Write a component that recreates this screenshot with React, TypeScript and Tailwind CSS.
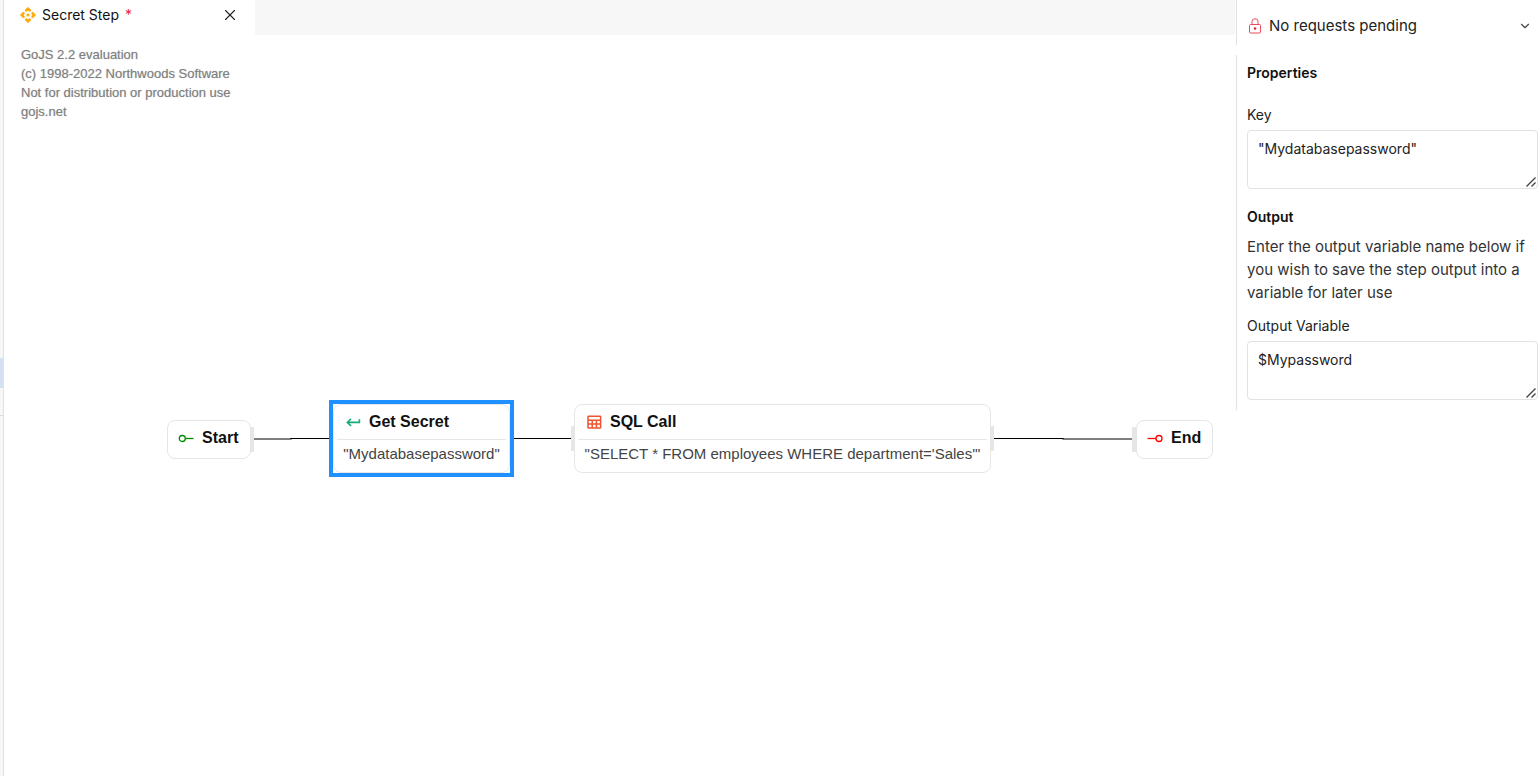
import React from 'react';
import { ChevronDown, X } from 'lucide-react';

const StepIcon = () => (
  <svg className="w-4 h-4 shrink-0" viewBox="0 0 16 16" fill="#ffab0f" stroke="#ffab0f" strokeWidth="1.2" strokeLinejoin="round">
    <path d="M8 0.8l2.6 2.4-.7 1L8 3 6.1 4.2l-.7-1zM8 15.2l2.6-2.4-.7-1L8 13l-1.9-1.2-.7 1zM0.8 8l2.4-2.6 1 .7L3 8l1.2 1.9-1 .7zM15.2 8l-2.4-2.6-1 .7L13 8l-1.2 1.9 1 .7z" />
    <circle cx="8" cy="8" r="1" />
    <path d="M5.3 8h.2M10.5 8h.2" strokeWidth="1" />
  </svg>
);

const LockIcon = () => (
  <svg className="w-3 h-4 shrink-0" viewBox="0 0 12 16" fill="none" stroke="#ec4a5c">
    <rect x="0.5" y="6.5" width="11" height="8.5" rx="1" />
    <path d="M3 6.5V3.5a3 2.7 0 0 1 6 0v3" />
    <circle cx="6" cy="10.5" r="1.3" fill="#e0233c" stroke="none" />
  </svg>
);

const StartIcon = () => (
  <svg className="w-4 h-4 shrink-0" viewBox="0 0 16 16" fill="none" stroke="#008a00" strokeWidth="1.3">
    <circle cx="4.3" cy="8.5" r="3" />
    <path d="M7.3 8.5h8.2" />
  </svg>
);

const EndIcon = () => (
  <svg className="w-4 h-4 shrink-0" viewBox="0 0 16 16" fill="none" stroke="#ff0000" strokeWidth="1.3">
    <circle cx="12" cy="8.5" r="3" />
    <path d="M0.5 8.5H9" />
  </svg>
);

const ReturnIcon = () => (
  <svg className="w-4 h-4 shrink-0" viewBox="0 0 16 16" fill="none" stroke="#13ab78" strokeWidth="1.6">
    <path d="M6 4.8L2.3 8.4 6 12M2.6 8.4h11.8V5.2" />
  </svg>
);

const TableIcon = () => (
  <svg className="w-4 h-4 shrink-0" viewBox="0 0 16 16" fill="none" stroke="#f0532f" strokeWidth="1.5">
    <rect x="2" y="2.2" width="12.6" height="11.8" rx="0.6" />
    <path d="M2 6.2h12.6M2 10h12.6M6.2 6.2V14M10.4 6.2V14" />
  </svg>
);

const terminals = [
  { label: 'Start', icon: StartIcon, place: 'left-[163px] top-[385px] w-[84px]', port: '-right-[3px]' },
  { label: 'End', icon: EndIcon, place: 'left-[1132px] top-[385px] w-[77px]', port: '-left-1' },
];

const steps = [
  {
    label: 'Get Secret',
    detail: '"Mydatabasepassword"',
    icon: ReturnIcon,
    place: 'left-[329px] top-[369px] w-[177px] outline-4 outline-[#1e90ff]',
    ports: [] as string[],
  },
  {
    label: 'SQL Call',
    detail: '"SELECT * FROM employees WHERE department=\'Sales\'"',
    icon: TableIcon,
    place: 'left-[570px] top-[369px] w-[417px]',
    ports: ['-left-[3px]', '-right-[3px]'],
  },
];

const watermark = [
  'GoJS 2.2 evaluation',
  '(c) 1998-2022 Northwoods Software',
  'Not for distribution or production use',
  'gojs.net',
];

const Diagram = () => (
  <div className="relative flex-1 overflow-hidden bg-white font-['Liberation_Sans',Arial,sans-serif]">
    <div className="pt-[10px] pl-[17px] text-[13px] leading-[19px] text-[#808080] text-shadow-[0_0_1px_#80808080]">
      {watermark.map((line) => (
        <p key={line}>{line}</p>
      ))}
    </div>

    <svg className="absolute left-0 top-0 w-[1232px] h-[500px]" fill="none" stroke="#000" strokeWidth="1.2">
      <path d="M250 404H287V403.5H326M510 403.5H567M990 403.5H1059V404H1128" />
    </svg>

    {terminals.map((node) => {
      const Icon = node.icon;
      return (
        <div key={node.label} className={`absolute ${node.place}`}>
          <span className={`absolute top-[7px] w-1 h-[25px] bg-[#e6e6e6] ${node.port}`} />
          <div className="relative flex items-center gap-2 h-[39px] pl-[10px] pb-[3px] bg-white border border-[#e6e6e6] rounded-lg">
            <Icon />
            <span className="text-base leading-5 font-bold text-[#111]">{node.label}</span>
          </div>
        </div>
      );
    })}

    {steps.map((node) => {
      const Icon = node.icon;
      return (
        <div key={node.label} className={`absolute ${node.place}`}>
          {node.ports.map((port) => (
            <span key={port} className={`absolute top-[22px] w-1 h-[25px] bg-[#e6e6e6] ${port}`} />
          ))}
          <div className="relative h-[69px] px-[3px] bg-white border border-[#e6e6e6] rounded-lg">
            <div className="flex items-center gap-2 h-[35px] px-2 border-b border-[#e6e6e6]">
              <Icon />
              <span className="text-base leading-5 font-bold text-[#111]">{node.label}</span>
            </div>
            <p className="pt-1 text-center text-[15px] leading-5 text-[#444] whitespace-nowrap">{node.detail}</p>
          </div>
        </div>
      );
    })}
  </div>
);

type FieldProps = { id: string; label: string; value: string };

const Field = ({ id, label, value }: FieldProps) => (
  <div>
    <label htmlFor={id} className="block mb-[5px] text-sm">{label}</label>
    <div className="relative">
      <textarea
        id={id}
        defaultValue={value}
        className="block w-full h-[59px] px-[10px] py-2 text-sm leading-5 text-[#222] bg-white border border-[#e2e2e2] rounded resize-none"
      />
      <svg className="absolute right-[2px] bottom-[2px] w-[10px] h-[10px] pointer-events-none" viewBox="0 0 10 10" stroke="#444" strokeWidth="1.4">
        <path d="M0.5 9.5l9-9M5.5 9.5l4-4" />
      </svg>
    </div>
  </div>
);

const App = () => {
  return (
    <div className="flex min-h-screen bg-white font-[Inter,sans-serif] text-[#222]">
      <div className="flex flex-col w-1 shrink-0 bg-[#f7f7f7] border-r border-[#e2e2e2]">
        <div className="h-[358px]" />
        <div className="h-[30px] bg-[#d3e1f0]" />
        <div className="h-[28px] border-b border-[#dcdcdc]" />
      </div>

      <main className="flex flex-col flex-1 min-w-0">
        <div className="flex h-[35px] mr-px bg-[#f7f7f7]">
          <div className="flex items-center w-[251px] h-full pl-4 pr-4 pb-[5px] bg-white">
            <StepIcon />
            <span className="ml-[6px] text-sm text-[#111]">Secret Step</span>
            <span className="ml-[6px] text-sm text-[#e5253d]">*</span>
            <button type="button" aria-label="Close tab" className="ml-auto">
              <X className="w-[18px] h-[18px] text-[#222]" strokeWidth={1.5} />
            </button>
          </div>
        </div>
        <Diagram />
      </main>

      <aside className="w-[304px] shrink-0">
        <button type="button" className="flex items-center w-full h-[45px] pl-3 pr-2 pt-[6px] border-l border-[#e2e2e2] text-left">
          <LockIcon />
          <span className="ml-2 text-[15px] leading-5">No requests pending</span>
          <ChevronDown className="ml-auto w-[14px] h-[14px] text-[#444]" strokeWidth={2} />
        </button>

        <div className="mt-[10px] pl-[10px] pr-[2px] pt-2 pb-[10px] border-l border-[#e2e2e2]">
          <h2 className="mb-[22px] text-sm font-semibold text-[#111]">Properties</h2>
          <Field id="key" label="Key" value={'"Mydatabasepassword"'} />

          <h2 className="mt-[18px] text-sm font-semibold text-[#111]">Output</h2>
          <p className="mt-2 mb-3 text-[15px] leading-[23px] text-[#333]">
            Enter the output variable name below if you wish to save the step output into a variable for later use
          </p>
          <Field id="output" label="Output Variable" value="$Mypassword" />
        </div>
      </aside>
    </div>
  );
};

export default App;
